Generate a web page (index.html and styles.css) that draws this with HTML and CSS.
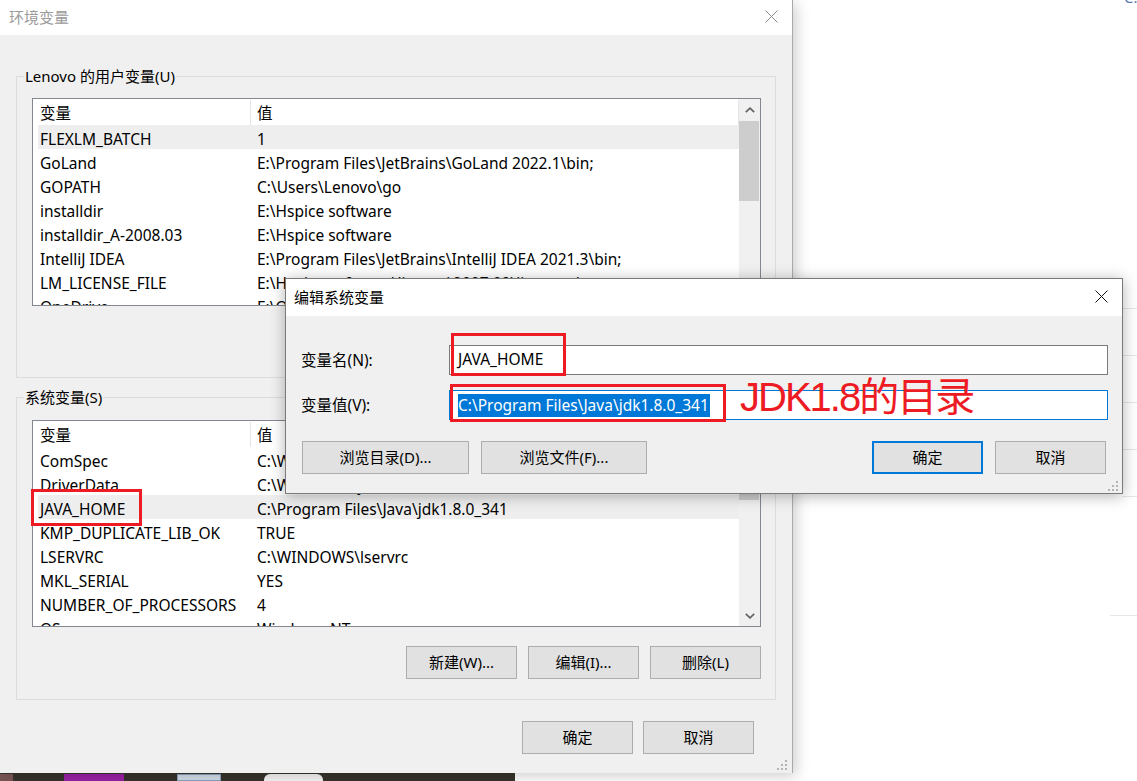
FILE: index.html
```html
<!DOCTYPE html>
<html lang="zh-CN">
<head>
<meta charset="utf-8">
<title>环境变量</title>
<link rel="stylesheet" href="styles.css">
</head>
<body>
<div class="desktop">
  <span class="peek-text">C:</span>
  <div class="bg-lines">
    <span class="bg-line l1"></span>
    <span class="bg-line l2"></span>
    <span class="bg-line l3"></span>
    <span class="bg-line l4"></span>
    <span class="bg-line l5"></span>
    <span class="bg-line l6"></span>
  </div>

  <div class="taskbar">
    <span class="tb-item tb-red"></span>
    <span class="tb-item tb-purple"></span>
    <span class="tb-item tb-blue"></span>
    <span class="tb-item tb-white"></span>
  </div>

  <div class="win main">
    <div class="titlebar">
      <span class="title">环境变量</span>
      <svg class="close" viewBox="0 0 13 13"><path d="M0.5 0.5 L12.5 12.5 M12.5 0.5 L0.5 12.5"/></svg>
    </div>
    <div class="win-body">
      <div class="group group-user">
        <span class="group-label">Lenovo 的用户变量(U)</span>
        <div class="list list-user">
          <div class="list-main">
            <div class="list-head"><span class="c1">变量</span><span class="c2">值</span></div>
            <div class="list-rows">
              <div class="row hl"><span class="c1">FLEXLM_BATCH</span><span class="c2">1</span></div>
              <div class="row"><span class="c1">GoLand</span><span class="c2">E:\Program Files\JetBrains\GoLand 2022.1\bin;</span></div>
              <div class="row"><span class="c1">GOPATH</span><span class="c2">C:\Users\Lenovo\go</span></div>
              <div class="row"><span class="c1">installdir</span><span class="c2">E:\Hspice software</span></div>
              <div class="row"><span class="c1">installdir_A-2008.03</span><span class="c2">E:\Hspice software</span></div>
              <div class="row"><span class="c1">IntelliJ IDEA</span><span class="c2">E:\Program Files\JetBrains\IntelliJ IDEA 2021.3\bin;</span></div>
              <div class="row"><span class="c1">LM_LICENSE_FILE</span><span class="c2">E:\Hspice software\license\2007.09\license.dat</span></div>
              <div class="row"><span class="c1">OneDrive</span><span class="c2">E:\OneDrive</span></div>
            </div>
          </div>
          <div class="vscroll">
            <div class="arrow up"><svg viewBox="0 0 10 6"><polyline points="0.8,5.2 5,1.2 9.2,5.2"/></svg></div>
            <div class="track"><div class="thumb thumb-user"></div></div>
            <div class="arrow down"><svg viewBox="0 0 10 6"><polyline points="0.8,0.8 5,4.8 9.2,0.8"/></svg></div>
          </div>
        </div>
        <div class="btn-row">
          <button class="btn">新建(N)...</button>
          <button class="btn">编辑(E)...</button>
          <button class="btn">删除(D)</button>
        </div>
      </div>

      <div class="group group-sys">
        <span class="group-label">系统变量(S)</span>
        <div class="list list-sys">
          <div class="list-main">
            <div class="list-head"><span class="c1">变量</span><span class="c2">值</span></div>
            <div class="list-rows">
              <div class="row"><span class="c1">ComSpec</span><span class="c2">C:\WINDOWS\system32\cmd.exe</span></div>
              <div class="row"><span class="c1">DriverData</span><span class="c2">C:\Windows\System32\Drivers\DriverData</span></div>
              <div class="row hl"><span class="c1">JAVA_HOME</span><span class="c2">C:\Program Files\Java\jdk1.8.0_341</span></div>
              <div class="row"><span class="c1">KMP_DUPLICATE_LIB_OK</span><span class="c2">TRUE</span></div>
              <div class="row"><span class="c1">LSERVRC</span><span class="c2">C:\WINDOWS\lservrc</span></div>
              <div class="row"><span class="c1">MKL_SERIAL</span><span class="c2">YES</span></div>
              <div class="row"><span class="c1">NUMBER_OF_PROCESSORS</span><span class="c2">4</span></div>
              <div class="row"><span class="c1">OS</span><span class="c2">Windows_NT</span></div>
            </div>
          </div>
          <div class="vscroll">
            <div class="arrow up"><svg viewBox="0 0 10 6"><polyline points="0.8,5.2 5,1.2 9.2,5.2"/></svg></div>
            <div class="track"><div class="thumb thumb-sys"></div></div>
            <div class="arrow down"><svg viewBox="0 0 10 6"><polyline points="0.8,0.8 5,4.8 9.2,0.8"/></svg></div>
          </div>
        </div>
        <div class="btn-row">
          <button class="btn">新建(W)...</button>
          <button class="btn">编辑(I)...</button>
          <button class="btn">删除(L)</button>
        </div>
      </div>

      <div class="footer-row">
        <button class="btn">确定</button>
        <button class="btn">取消</button>
      </div>

      <svg class="grip" viewBox="0 0 11 11">
        <rect x="8" y="0" width="2" height="2"/>
        <rect x="4" y="4" width="2" height="2"/><rect x="8" y="4" width="2" height="2"/>
        <rect x="0" y="8" width="2" height="2"/><rect x="4" y="8" width="2" height="2"/><rect x="8" y="8" width="2" height="2"/>
      </svg>
    </div>
  </div>

  <div class="win dialog">
    <div class="titlebar">
      <span class="title">编辑系统变量</span>
      <svg class="close" viewBox="0 0 13 13"><path d="M0.5 0.5 L12.5 12.5 M12.5 0.5 L0.5 12.5"/></svg>
    </div>
    <div class="dlg-body">
      <div class="field">
        <label class="field-label">变量名(N):</label>
        <div class="input">JAVA_HOME</div>
      </div>
      <div class="field">
        <label class="field-label">变量值(V):</label>
        <div class="input focus"><span class="sel">C:\Program Files\Java\jdk1.8.0_341</span></div>
      </div>
      <div class="dlg-buttons">
        <button class="btn btn-browse">浏览目录(D)...</button>
        <button class="btn btn-browse2">浏览文件(F)...</button>
        <button class="btn btn-default">确定</button>
        <button class="btn btn-cancel">取消</button>
      </div>
      <svg class="grip" viewBox="0 0 11 11">
        <rect x="8" y="0" width="2" height="2"/>
        <rect x="4" y="4" width="2" height="2"/><rect x="8" y="4" width="2" height="2"/>
        <rect x="0" y="8" width="2" height="2"/><rect x="4" y="8" width="2" height="2"/><rect x="8" y="8" width="2" height="2"/>
      </svg>
    </div>
  </div>

  <span class="mark mark-name"></span>
  <span class="mark mark-value"></span>
  <span class="mark mark-row"></span>
  <span class="note">JDK1.8的目录</span>
</div>
</body>
</html>
```
FILE: styles.css
```css
* { box-sizing: border-box; margin: 0; padding: 0; }

html, body {
  width: 1137px;
  height: 781px;
  overflow: hidden;
  background: #ffffff;
}

body {
  font-family: "Noto Sans", "Noto Sans CJK SC", sans-serif;
  font-size: 15.5px;
  color: #000000;
}

.desktop {
  position: relative;
  width: 1137px;
  height: 781px;
  overflow: hidden;
  background: #ffffff;
}

/* faint things behind the windows */
.peek-text {
  position: absolute;
  left: 1124px;
  top: -13px;
  font-size: 15px;
  color: #5b7fb0;
}
.bg-line {
  position: absolute;
  height: 1px;
  background: #e6e6e6;
}
.l1 { left: 1122px; top: 308px; width: 15px; }
.l2 { left: 1122px; top: 355px; width: 15px; }
.l3 { left: 1122px; top: 402px; width: 15px; }
.l4 { left: 1122px; top: 449px; width: 15px; }
.l5 { left: 1122px; top: 496px; width: 15px; }
.l6 { left: 1110px; top: 615px; width: 27px; }

.taskbar {
  position: absolute;
  left: 0;
  top: 773px;
  width: 515px;
  height: 8px;
  background: #37332c;
}
.tb-item { position: absolute; top: 1px; height: 7px; }
.tb-red { left: 0; width: 13px; background: #7a5656; }
.tb-purple { left: 64px; width: 60px; background: #9a22a6; }
.tb-blue { left: 177px; width: 44px; background: #d3deea; border: 1px solid #8aa3bf; }
.tb-white { left: 264px; width: 59px; background: #f6f6f6; border-radius: 6px 6px 0 0; }

/* windows */
.win {
  position: absolute;
  display: flex;
  flex-direction: column;
  background: #f0f0f0;
}

.main {
  left: 0;
  top: 0;
  width: 793px;
  height: 773px;
  border-right: 1px solid #a9a9a9;
  box-shadow: 3px 3px 14px rgba(0, 0, 0, 0.2);
}

.titlebar {
  flex: none;
  display: flex;
  align-items: center;
  justify-content: space-between;
  background: #ffffff;
}
.main .titlebar { height: 35px; padding: 0 14px 2px 9px; }
.title { font-size: 15px; line-height: 20px; }
.main .title { color: #9b9b9b; }

.close { width: 13px; height: 13px; display: block; }
.close path { stroke-width: 1; fill: none; }
.main .close path { stroke: #8a8a8a; }
.dialog .close path { stroke: #111111; }

.win-body {
  position: relative;
  flex: 1;
  display: flex;
  flex-direction: column;
  padding: 41px 16px 0 16px;
}

.group {
  position: relative;
  border: 1px solid #dcdcdc;
  padding: 0 14px 0 15px;
}
.group-user { padding-top: 21px; height: 302px; }
.group-sys { padding-top: 22px; height: 303px; margin-top: 19px; }

.group-label {
  position: absolute;
  left: 7px;
  top: -11px;
  padding: 0 1px;
  background: #f0f0f0;
  font-size: 15px;
  line-height: 20px;
  white-space: nowrap;
}

/* list views */
.list {
  display: flex;
  width: 729px;
  background: #ffffff;
  border: 1px solid #828790;
}
.list-user { height: 208px; }
.list-sys { height: 207px; }

.list-main {
  width: 706px;
  display: flex;
  flex-direction: column;
  overflow: hidden;
}

.list-head {
  flex: none;
  display: flex;
  height: 26px;
  line-height: 26px;
  padding-top: 1px;
}
.list-head .c1 {
  width: 218px;
  padding-left: 7px;
  border-right: 1px solid #e5e5e5;
}
.list-head .c2 {
  flex: 1;
  padding-left: 6px;
  border-right: 1px solid #e5e5e5;
}

.list-rows { flex: 1; overflow: hidden; }

.row {
  display: flex;
  height: 24px;
  line-height: 28px;
  margin-left: 5px;
  white-space: nowrap;
}
.row.hl { background: #eeeeee; }
.row .c1 { width: 212px; padding-left: 2px; flex: none; overflow: hidden; height: 24px; }
.row .c2 { padding-left: 7px; height: 24px; }

.vscroll {
  width: 21px;
  display: flex;
  flex-direction: column;
  background: #f0f0f0;
}
.arrow {
  flex: none;
  height: 22px;
  display: flex;
  align-items: center;
  justify-content: center;
}
.arrow.down { height: 21px; }
.arrow svg { width: 10px; height: 6px; display: block; }
.arrow polyline { fill: none; stroke: #606060; stroke-width: 1.6; }
.track { flex: 1; }
.thumb { width: 20px; background: #cdcdcd; }
.thumb-user { height: 80px; }
.thumb-sys { height: 57px; }

/* buttons */
.btn {
  font-family: inherit;
  font-size: 15px;
  color: #000000;
  height: 33px;
  width: 111px;
  background: #e1e1e1;
  border: 1px solid #adadad;
  line-height: 31px;
  text-align: center;
  white-space: nowrap;
}

.btn-row {
  display: flex;
  justify-content: flex-end;
  gap: 11px;
  margin-top: 19px;
}

.footer-row {
  display: flex;
  justify-content: flex-end;
  gap: 10px;
  margin-top: 21px;
  padding-right: 22px;
}

.grip {
  position: absolute;
  width: 11px;
  height: 11px;
  fill: #b4b4b4;
}
.main .grip { right: 4px; bottom: 2px; }

/* edit dialog */
.dialog {
  left: 285px;
  top: 278px;
  width: 838px;
  height: 216px;
  border: 1px solid #7a7a7a;
  box-shadow: 0 2px 14px rgba(0, 0, 0, 0.3);
}
.dialog .titlebar { height: 37px; padding: 0 14px 2px 8px; }

.dlg-body {
  position: relative;
  flex: 1;
  padding: 29px 14px 0 15px;
}

.field {
  display: flex;
  align-items: center;
  height: 30px;
}
.field + .field { margin-top: 15px; }
.field-label { width: 148px; flex: none; padding-bottom: 2px; }

.input {
  width: 659px;
  height: 30px;
  background: #ffffff;
  border: 1px solid #7a7a7a;
  padding-left: 8px;
  line-height: 26px;
  white-space: nowrap;
}
.input.focus {
  border-color: #0078d7;
  display: flex;
  align-items: center;
}
.sel {
  background: #0078d7;
  color: #ffffff;
  line-height: 23px;
  height: 23px;
  padding: 0 1px 0 0;
}

.dlg-buttons {
  display: flex;
  margin-top: 21px;
  padding: 0 2px 0 1px;
}
.btn-browse { width: 167px; }
.btn-browse2 { width: 166px; margin-left: 12px; }
.btn-default {
  margin-left: auto;
  border: 2px solid #0078d7;
  line-height: 29px;
}
.btn-cancel { margin-left: 12px; }
.dialog .grip { right: 3px; bottom: 1px; }

/* red annotations */
.mark {
  position: absolute;
  border: 3px solid #ed1c24;
}
.mark-name { left: 451px; top: 333px; width: 115px; height: 43px; }
.mark-value { left: 450px; top: 384px; width: 276px; height: 38px; }
.mark-row { left: 31px; top: 489px; width: 111px; height: 37px; }

.note {
  position: absolute;
  left: 740px;
  top: 377px;
  font-family: "Liberation Sans", "Noto Sans CJK SC", sans-serif;
  font-size: 40px;
  line-height: 40px;
  letter-spacing: -2px;
  color: #ed1c24;
  white-space: nowrap;
}
```
